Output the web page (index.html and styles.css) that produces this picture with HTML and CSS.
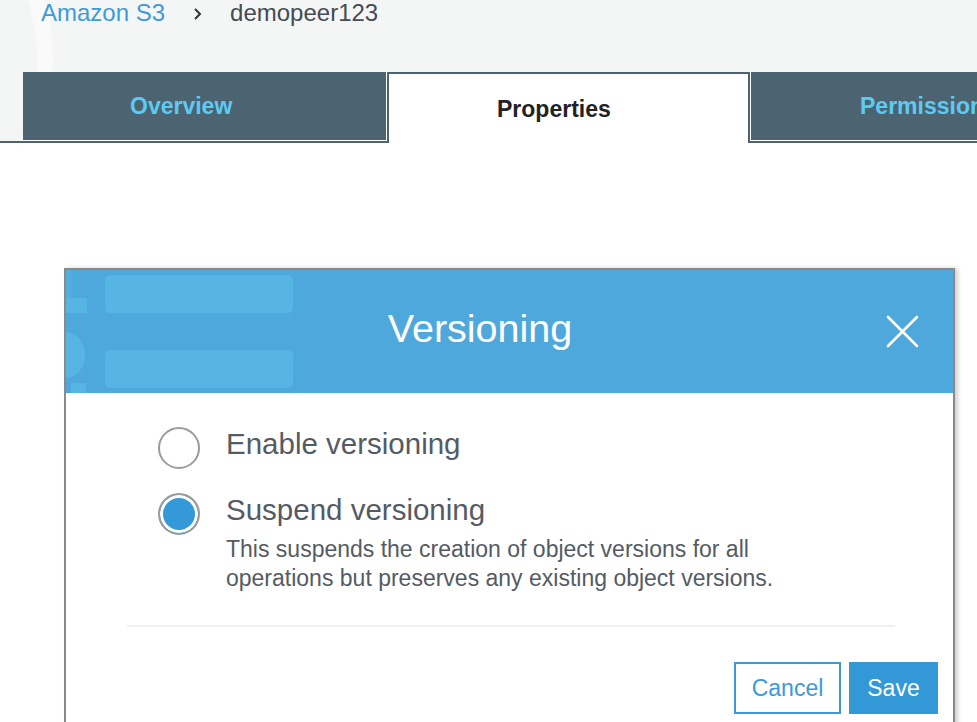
FILE: index.html
```html
<!DOCTYPE html>
<html lang="en">
<head>
<meta charset="utf-8">
<title>Versioning</title>
<link rel="stylesheet" href="styles.css">
</head>
<body>
<div class="top">
  <nav class="crumbs">
    <a class="crumb-link">Amazon S3</a>
    <svg class="chev" width="10" height="14" viewBox="0 0 10 14"><polyline points="2,2 7,7 2,12" fill="none" stroke="#333" stroke-width="2"/></svg>
    <span class="crumb-cur">demopeer123</span>
  </nav>
  <div class="tabs">
    <div class="tab tab-first">Overview</div>
    <div class="tab tab-active">Properties</div>
    <div class="tab tab-last">Permissions</div>
  </div>
</div>

<div class="modal">
  <div class="modal-head">
    <svg class="head-deco" width="260" height="123" viewBox="0 0 260 123">
      <rect x="39" y="5" width="188" height="38" rx="5" fill="#57b5e4"/>
      <rect x="39" y="80" width="188" height="38" rx="5" fill="#57b5e4"/>
      <rect x="0" y="0" width="5" height="28" fill="#53afe0"/>
      <rect x="0" y="28" width="21" height="15" fill="#57b5e4"/>
      <path d="M0 62 A 19 23 0 0 1 0 108 Z" fill="#57b5e4"/>
      <rect x="5" y="113" width="15" height="10" fill="#57b5e4"/>
    </svg>
    <h2 class="modal-title">Versioning</h2>
    <button class="close" aria-label="Close">
      <svg width="33" height="33" viewBox="0 0 33 33"><path d="M2 2 L31 31 M31 2 L2 31" stroke="#fff" stroke-width="2.6" stroke-linecap="round"/></svg>
    </button>
  </div>
  <div class="modal-body">
    <div class="option">
      <span class="radio"></span>
      <span class="opt-label">Enable versioning</span>
    </div>
    <div class="option">
      <span class="radio radio-on"></span>
      <div>
        <div class="opt-label">Suspend versioning</div>
        <p class="opt-desc">This suspends the creation of object versions for all<br>operations but preserves any existing object versions.</p>
      </div>
    </div>
  </div>
  <div class="sep"></div>
  <div class="modal-foot">
    <button class="btn btn-cancel">Cancel</button>
    <button class="btn btn-save">Save</button>
  </div>
</div>
</body>
</html>
```
FILE: styles.css
```css
html, body {
  margin: 0;
  padding: 0;
  overflow: hidden;
  height: 722px;
}
body {
  background: #ffffff;
  font-family: "Liberation Sans", Arial, sans-serif;
  color: #545b64;
}
.top {
  background: #f4f5f5;
  background-image: radial-gradient(circle at -160px 60px, transparent 196px, rgba(255,255,255,0.45) 198px, rgba(255,255,255,0.45) 212px, transparent 214px);
}
.crumbs {
  display: flex;
  align-items: center;
  padding: 1px 0 0 41px;
  height: 24px;
  font-size: 24px;
  line-height: 24px;
}
.crumb-link {
  color: #3f9ad8;
}
.chev {
  margin: 2px 27px 0 28px;
}
.crumb-cur {
  color: #444b53;
}
.tabs {
  display: flex;
  margin-top: 47px;
  padding-left: 23px;
  border-bottom: 2px solid #4c6371;
  height: 69px;
}
.tab {
  width: 364px;
  flex: none;
  height: 69px;
  display: flex;
  align-items: center;
  padding-left: 107px;
  font-size: 23px;
  font-weight: bold;
  background: #4c6371;
  color: #5ccbf3;
  box-sizing: border-box;
  white-space: nowrap;
}
.tab-first {
  box-shadow: inset -1px -1px 0 #ffffff;
}
.tab-last {
  padding-left: 110px;
  box-shadow: inset 1px -1px 0 #ffffff;
}
.tab-active {
  width: 363px;
  height: 71px;
  padding-left: 108px;
  background: #ffffff;
  color: #222;
  border: 2px solid #4c6371;
  border-bottom: none;
  padding-top: 2px;
}
.modal {
  margin: 125px 0 0 64px;
  width: 891px;
  height: 500px;
  box-sizing: border-box;
  border: 2px solid #8a8a8a;
  border-bottom: none;
  box-shadow: 3px 0 4px rgba(0,0,0,0.18);
  background: #fff;
}
.modal-head {
  position: relative;
  height: 123px;
  background: #4fa8dc;
  display: flex;
  align-items: center;
  overflow: hidden;
}
.head-deco {
  position: absolute;
  left: 0;
  top: 0;
}
.modal-title {
  position: relative;
  flex: 1;
  margin: 0 0 8px 0;
  padding-left: 8px;
  text-align: center;
  font-size: 39.5px;
  font-weight: normal;
  color: #fff;
  line-height: 44px;
}
.close {
  position: relative;
  width: 33px;
  height: 33px;
  padding: 0;
  margin: 0 34px 0 0;
  border: none;
  background: none;
}
.close svg {
  display: block;
}
.modal-body {
  padding: 34px 0 0 92px;
  display: flex;
  flex-direction: column;
  gap: 24px;
}
.option {
  display: grid;
  grid-template-columns: 42px 1fr;
  column-gap: 26px;
  align-items: start;
}
.radio {
  width: 42px;
  height: 42px;
  box-sizing: border-box;
  border: 2px solid #9b9b9b;
  border-radius: 50%;
  background: #fff;
}
.radio-on {
  background: #3399d8;
  box-shadow: inset 0 0 0 3px #fff;
}
.opt-label {
  font-size: 29.5px;
  line-height: 34px;
  padding-bottom: 8px;
  color: #545b64;
}
.opt-desc {
  margin: 0;
  font-size: 23px;
  line-height: 29px;
  color: #545b64;
}
.sep {
  margin: 32px 58px 0 61px;
  height: 2px;
  background: #f0f0f0;
}
.modal-foot {
  display: flex;
  justify-content: flex-end;
  gap: 8px;
  padding: 35px 15px 0 0;
}
.btn {
  height: 52px;
  box-sizing: border-box;
  font-family: "Liberation Sans", Arial, sans-serif;
  font-size: 23px;
  padding: 0;
  cursor: pointer;
}
.btn-cancel {
  width: 107px;
  border: 2px solid #3a9ad9;
  background: #fff;
  color: #3a9ad9;
}
.btn-save {
  width: 89px;
  border: none;
  background: #3399d6;
  color: #fff;
}
```
